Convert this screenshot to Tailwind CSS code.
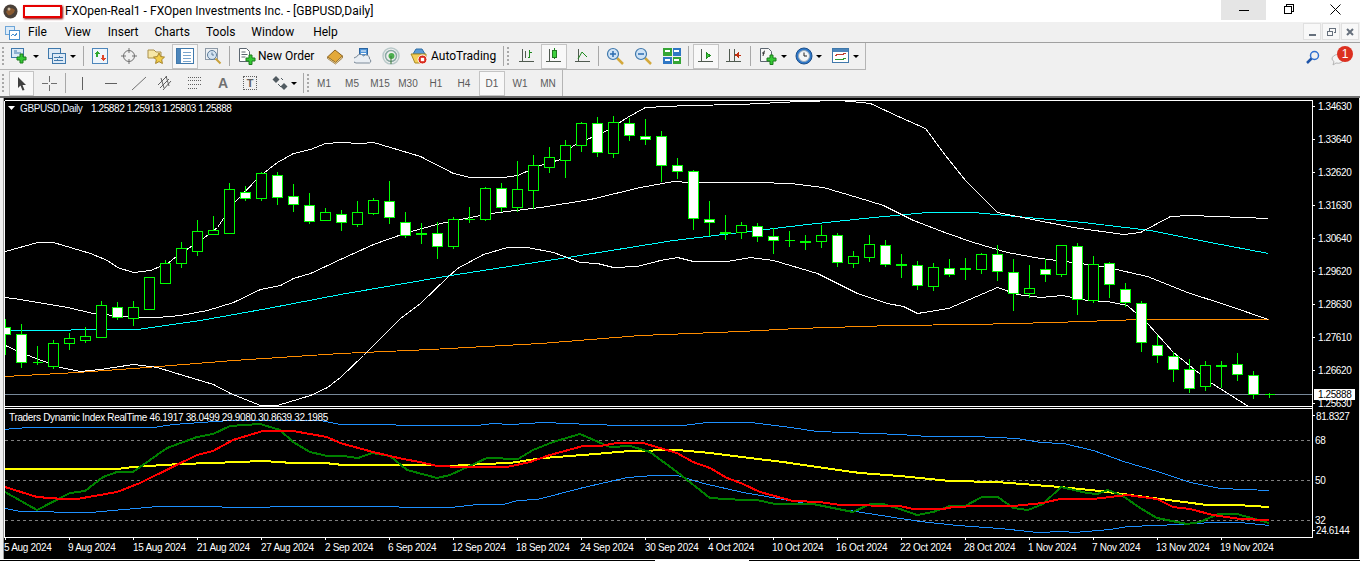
<!DOCTYPE html>
<html lang="en">
<head>
    <meta charset="UTF-8">
    <title>FXOpen-Real1 - FXOpen Investments Inc. - [GBPUSD,Daily]</title>
    <script src="https://cdn.jsdelivr.net/npm/@tailwindcss/browser@4"></script>
</head>
<body class="w-[1360px] h-[561px] overflow-hidden bg-[#f0f0f0] font-['Liberation_Sans',Arial,sans-serif]">

    <!-- Title bar -->
    <div class="h-[22px] bg-white flex items-center relative">
        <svg class="ml-[3px]" width="15" height="15" viewBox="0 0 15 15">
            <circle cx="7.5" cy="7.5" r="7" fill="#4a4038"/>
            <path d="M3 8c2-4 6-5 9-2-1 4-5 6-7 5z" fill="#8a5a30"/>
            <circle cx="6" cy="5" r="1.5" fill="#c9b8a0"/>
        </svg>
        <div class="ml-[5px] w-[39px] h-[13px] bg-white border-2 border-[#e60000] shadow-[1px_1px_2px_#800000]"></div>
        <span class="ml-[3px] text-[12px] text-black font-['Roboto',sans-serif] tracking-[0.03px] whitespace-nowrap">FXOpen-Real1 - FXOpen Investments Inc. - [GBPUSD,Daily]</span>
        <div class="absolute left-[1221px] top-0 w-[45px] h-[20px] bg-[#e5e5e5] flex items-center justify-center">
            <div class="w-[10px] h-px bg-black"></div>
        </div>
        <svg class="absolute left-[1284px] top-[4px]" width="10" height="10" viewBox="0 0 10 10" fill="none" stroke="#000" shape-rendering="crispEdges">
            <rect x="0.5" y="2.5" width="7" height="7"/>
            <path d="M2.5 2.5v-2h7v7h-2"/>
        </svg>
        <svg class="absolute left-[1330px] top-[4px]" width="11" height="11" viewBox="0 0 11 11" stroke="#000">
            <path d="M0.5 0.5l10 10M10.5 0.5l-10 10"/>
        </svg>
    </div>

    <!-- Menu -->
    <div class="h-[21px] flex items-center relative border-b border-[#a0a0a0] text-[12px] text-black font-['Roboto',sans-serif]">
        <svg class="ml-[5px]" width="15" height="15" viewBox="0 0 15 15" fill="none" shape-rendering="crispEdges">
            <rect x="0.5" y="1.5" width="9" height="8" fill="#dcebf8" stroke="#6ea6d8"/>
            <rect x="4.5" y="5.5" width="10" height="9" fill="#fff" stroke="#4a90d0"/>
            <path d="M6 11l2-2 2 2 2-3" stroke="#4a90d0"/>
        </svg>
        <span class="ml-[8px]">File</span>
        <span class="ml-[18px]">View</span>
        <span class="ml-[17px]">Insert</span>
        <span class="ml-[16px]">Charts</span>
        <span class="ml-[16px]">Tools</span>
        <span class="ml-[16px]">Window</span>
        <span class="ml-[19px]">Help</span>
        <div class="absolute left-[1303px] top-[1px] w-[18px] h-[17px] bg-[#f8f8f8] border border-[#e0e0e0] flex items-end justify-center pb-[3px]">
            <div class="w-[7px] h-[2px] bg-[#66707c]"></div>
        </div>
        <div class="absolute left-[1322px] top-[1px] w-[18px] h-[17px] bg-[#f8f8f8] border border-[#e0e0e0] flex items-center justify-center">
            <svg width="9" height="8" viewBox="0 0 9 8" fill="none" stroke="#66707c" shape-rendering="crispEdges"><rect x="0.5" y="3.5" width="5" height="4"/><path d="M2.5 3v-2.500h6v4h-2"/></svg>
        </div>
        <div class="absolute left-[1341px] top-[1px] w-[18px] h-[17px] bg-[#f8f8f8] border border-[#e0e0e0] flex items-center justify-center">
            <svg width="8" height="8" viewBox="0 0 8 8" stroke="#66707c" stroke-width="2"><path d="M1 1l6 6M7 1l-6 6"/></svg>
        </div>
    </div>

    <!-- Toolbar row 1 -->
    <div class="h-[27px] w-[866px] flex items-center border-b border-r border-[#b4b4b4]">
        <div class="ml-[2px] w-[3px] h-[18px] border-l-2 border-dotted border-[#a8a8a8]"></div>
        <svg class="ml-[5px]" width="18" height="18" viewBox="0 0 18 18"><rect x="1.500" y="1.500" width="12" height="9" fill="#dce9f6" stroke="#3f78ab"/><path d="M4 6h7M4 4h3" stroke="#3f78ab"/><path d="M10 7h3v3h3v3h-3v3h-3v-3H7v-3h3z" fill="#35c935" stroke="#1c7c1c"/></svg>
        <div class="ml-[5px] w-0 h-0 border-x-[3px] border-t-[3px] border-x-transparent border-t-black"></div>
        <svg class="ml-[9px]" width="18" height="18" viewBox="0 0 18 18" fill="#dce9f6" stroke="#3f78ab" shape-rendering="crispEdges"><rect x="0.500" y="1.500" width="12" height="10"/><rect x="4.500" y="6.500" width="13" height="10"/><path d="M6 10h9M6 13h9M11 9v2M9 12v2"/></svg>
        <div class="ml-[4px] w-0 h-0 border-x-[3px] border-t-[3px] border-x-transparent border-t-black"></div>
        <div class="ml-[7px] w-px h-[20px] bg-[#a8a8a8]"></div>
        <svg class="ml-[7px]" width="18" height="18" viewBox="0 0 18 18" shape-rendering="crispEdges"><rect x="1.500" y="1.500" width="15" height="15" fill="#eef5fb" stroke="#4d86bb"/><path d="M6 4l3 3H7v3H5V7H3z" fill="#2fa82f"/><path d="M12 14l-3-3h2V8h2v3h2z" fill="#e0452a"/></svg>
        <svg class="ml-[11px]" width="18" height="18" viewBox="0 0 18 18" fill="none" stroke="#707070"><circle cx="9" cy="9" r="5.500"/><path d="M9 1v5M9 12v5M1 9h5M12 9h5"/></svg>
        <svg class="ml-[9px]" width="18" height="18" viewBox="0 0 18 18"><path d="M1 3h6l2 2h5v6H1z" fill="#f6e7a8" stroke="#a98f4a"/><path d="M12 6l1.700 3.600 3.800.5-2.800 2.600.7 3.800-3.400-1.900-3.400 1.900.7-3.800-2.800-2.600 3.800-.5z" fill="#f2cd4a" stroke="#a5832a"/></svg>
        <div class="ml-[7px] w-[26px] h-[25px] bg-[#f8f8f8] border border-[#c4c4c4] flex items-center justify-center">
            <svg width="18" height="16" viewBox="0 0 18 16" shape-rendering="crispEdges"><rect x="0.500" y="0.500" width="17" height="15" fill="#fff" stroke="#3f78ab"/><rect x="1" y="1" width="4" height="14" fill="#4d86bb"/><path d="M7 4h8M7 7h8M7 10h8M7 13h8" stroke="#7aa5cc"/></svg>
        </div>
        <svg class="ml-[6px]" width="18" height="18" viewBox="0 0 18 18" fill="none"><rect x="1.500" y="1.500" width="12" height="11" fill="#edf0f3" stroke="#8d99a6"/><circle cx="8" cy="8" r="4.500" fill="#d5e4f2" stroke="#5a7a98"/><path d="M8 5.500V8h2" stroke="#5a7a98"/><path d="M11.500 11.500l5 5" stroke="#c9a13c" stroke-width="2"/></svg>
        <div class="ml-[7px] w-px h-[20px] bg-[#a8a8a8]"></div>
        <svg class="ml-[8px]" width="18" height="18" viewBox="0 0 18 18"><path d="M1.500 1.500h7l3 3v10h-10z" fill="#fff" stroke="#5c6670"/><path d="M3.500 5h4M3.500 7.500h6M3.500 10h4" stroke="#5c6670"/><path d="M11 8h3v3h3v3h-3v3.500h-3V14H8v-3h3z" fill="#35c935" stroke="#1c7c1c"/></svg>
        <span class="ml-[2px] w-[58px] text-[12px] text-black font-['Roboto',sans-serif] whitespace-nowrap">New Order</span>
        <svg class="ml-[10px]" width="18" height="18" viewBox="0 0 18 18"><path d="M1.500 10L9 3l7.500 6-7 6.500z" fill="#e3a93a" stroke="#8a6220"/><path d="M1.500 10l8 5.500 7-6.500v2l-7 6-8-5.500z" fill="#f5e2ae" stroke="#8a6220" stroke-width="0.700"/></svg>
        <svg class="ml-[10px]" width="18" height="18" viewBox="0 0 18 18"><rect x="5.500" y="1.500" width="8" height="10" fill="#4e94d8" stroke="#2a64a0"/><path d="M7 4h5M7 6.500h5" stroke="#fff"/><path d="M2 16a3 3 0 0 1 .5-6 4 4 0 0 1 7-1 3.500 3.500 0 0 1 6 3 2.200 2.200 0 0 1 0 4z" fill="#e9eef3" stroke="#7d8b99"/></svg>
        <svg class="ml-[10px]" width="18" height="18" viewBox="0 0 18 18" fill="none"><circle cx="9" cy="9" r="8" stroke="#b9c9c9" stroke-width="1.500"/><circle cx="9" cy="9" r="5.500" stroke="#8aa9a4" stroke-width="1.500"/><circle cx="9.500" cy="9" r="3" fill="#4caf50"/><path d="M9 9v8" stroke="#3a7c3a"/></svg>
        <svg class="ml-[10px]" width="18" height="18" viewBox="0 0 18 18"><path d="M3 7l3-5h6l3 5z" fill="#5a9bd5" stroke="#2f6ea5"/><path d="M1 7h15v2l-3 7H5L2 9z" fill="#f3cf58" stroke="#a98a25"/><circle cx="12.500" cy="12.500" r="4.500" fill="#d92a1c" stroke="#fff"/><rect x="10.800" y="10.800" width="3.400" height="3.400" fill="#fff"/></svg>
        <span class="ml-[3px] w-[66px] text-[12px] text-black font-['Roboto',sans-serif] whitespace-nowrap">AutoTrading</span>
        <div class="ml-[6px] w-px h-[20px] bg-[#a8a8a8]"></div>
        <div class="ml-[3px] w-[3px] h-[18px] border-l-2 border-dotted border-[#a8a8a8]"></div>
        <svg class="ml-[8px]" width="18" height="18" viewBox="0 0 18 18" fill="none" stroke="#505a50" shape-rendering="crispEdges"><path d="M4.500 2v13M1 14.500h15"/><path d="M7 4v7" /><path d="M11.500 3v7M11.500 10h-2M11.500 5h2" stroke="#1f8a1f"/></svg>
        <div class="ml-[5px] w-[26px] h-[25px] bg-[#f8f8f8] border border-[#c4c4c4] flex items-center justify-center">
            <svg width="18" height="18" viewBox="0 0 18 18" fill="none" stroke="#505a50" shape-rendering="crispEdges"><path d="M4.500 2v13M1 14.500h15"/><path d="M9.500 1v11" stroke="#1f8a1f"/><rect x="7.500" y="3.500" width="4" height="7" fill="#3ed13e" stroke="#1f7a1f"/></svg>
        </div>
        <svg class="ml-[7px]" width="18" height="18" viewBox="0 0 18 18" fill="none" stroke="#505a50"><path d="M4.500 2v13M1 14.500h15" shape-rendering="crispEdges"/><path d="M4 12l4-7 5 5" stroke="#1f8a1f"/></svg>
        <div class="ml-[6px] w-px h-[20px] bg-[#a8a8a8]"></div>
        <svg class="ml-[7px]" width="18" height="18" viewBox="0 0 18 18" fill="none"><path d="M11 11l6 6" stroke="#d4a93c" stroke-width="2.500"/><circle cx="7" cy="7" r="5.500" fill="#cfe3f6" stroke="#3f78ab" stroke-width="1.200"/><path d="M4 7h6M7 4v6" stroke="#2b6cb0" stroke-width="1.500"/></svg>
        <svg class="ml-[10px]" width="18" height="18" viewBox="0 0 18 18" fill="none"><path d="M11 11l6 6" stroke="#d4a93c" stroke-width="2.500"/><circle cx="7" cy="7" r="5.500" fill="#cfe3f6" stroke="#3f78ab" stroke-width="1.200"/><path d="M4 7h6" stroke="#2b6cb0" stroke-width="1.500"/></svg>
        <svg class="ml-[11px]" width="18" height="18" viewBox="0 0 18 18" shape-rendering="crispEdges"><rect x="0" y="1" width="8.500" height="7.500" fill="#35a535"/><rect x="9.500" y="1" width="8.500" height="7.500" fill="#2f77c4"/><rect x="0" y="9.500" width="8.500" height="7.500" fill="#2f77c4"/><rect x="9.500" y="9.500" width="8.500" height="7.500" fill="#35a535"/><path d="M2 4h5M11 4h5M2 13h5M11 13h5" stroke="#fff" stroke-width="2"/></svg>
        <div class="ml-[7px] w-px h-[20px] bg-[#a8a8a8]"></div>
        <div class="ml-[4px] w-[26px] h-[25px] bg-[#f8f8f8] border border-[#c4c4c4] flex items-center justify-center">
            <svg width="18" height="18" viewBox="0 0 18 18" fill="none" stroke="#505a50" shape-rendering="crispEdges"><path d="M4.500 2v13M1 14.500h15"/><path d="M9 5v7l4-3.500z" fill="#3ed13e" stroke="#1f8a1f"/></svg>
        </div>
        <svg class="ml-[6px]" width="18" height="18" viewBox="0 0 18 18" fill="none" stroke="#505a50" shape-rendering="crispEdges"><path d="M4.500 2v13M9.500 2v13M1 14.500h15"/><path d="M16 8h-3M13 6v4l-2.500-2z" stroke="#c03010" fill="#c03010"/></svg>
        <div class="ml-[7px] w-px h-[20px] bg-[#a8a8a8]"></div>
        <svg class="ml-[8px]" width="18" height="18" viewBox="0 0 18 18"><path d="M1.500 1.500h8l3 3v10h-11z" fill="#f6f6f6" stroke="#5c6670"/><path d="M6 4c-2 0-1 2-2 5M3 6h3" fill="none" stroke="#333"/><path d="M11 8h3v3h3v3h-3v3.500h-3V14H8v-3h3z" fill="#35c935" stroke="#1c7c1c"/></svg>
        <div class="ml-[4px] w-0 h-0 border-x-[3px] border-t-[3px] border-x-transparent border-t-black"></div>
        <svg class="ml-[8px]" width="18" height="18" viewBox="0 0 18 18" fill="none"><circle cx="9" cy="9" r="8" fill="#2f78c8" stroke="#1d4f8a"/><circle cx="9" cy="9" r="5.500" fill="#f3f5f7" stroke="#9ab"/><path d="M9 5.500V9h3" stroke="#222"/></svg>
        <div class="ml-[3px] w-0 h-0 border-x-[3px] border-t-[3px] border-x-transparent border-t-black"></div>
        <svg class="ml-[10px]" width="18" height="18" viewBox="0 0 18 18" fill="none" shape-rendering="crispEdges"><rect x="0.500" y="1.500" width="16" height="14" fill="#fff" stroke="#3f78ab"/><rect x="1" y="2" width="15" height="3" fill="#4d86bb"/><path d="M3 9l3-2 3 1 5-2" stroke="#c04030"/><path d="M3 13l3-1 3 1 5-2" stroke="#2f9a2f"/></svg>
        <div class="ml-[3px] w-0 h-0 border-x-[3px] border-t-[3px] border-x-transparent border-t-black"></div>
    </div>

    <!-- Toolbar row 2 -->
    <div class="h-[26px] relative flex items-center text-[10px] text-[#5a5a5a]">
        <div class="w-[563px] h-full flex items-center border-r border-[#b4b4b4]">
            <div class="ml-[2px] w-[3px] h-[18px] border-l-2 border-dotted border-[#a8a8a8]"></div>
            <div class="ml-[4px] w-[25px] h-[25px] bg-[#f8f8f8] border border-[#c4c4c4] flex items-center justify-center">
                <svg width="12" height="15" viewBox="0 0 12 15"><path d="M2 1l8 8H6.500l2 5-2 .5-2-5L2 12z" fill="#404040"/></svg>
            </div>
            <svg class="ml-[6px]" width="18" height="18" viewBox="0 0 18 18" stroke="#707070" shape-rendering="crispEdges"><path d="M9.500 2v6M9.500 11v6M2 9.500h6M11 9.500h6"/></svg>
            <div class="ml-[7px] w-px h-[20px] bg-[#a8a8a8]"></div>
            <svg class="ml-[7px]" width="18" height="18" viewBox="0 0 18 18" stroke="#606060" shape-rendering="crispEdges"><path d="M9.500 3v13"/></svg>
            <svg class="ml-[11px]" width="18" height="18" viewBox="0 0 18 18" stroke="#606060" shape-rendering="crispEdges"><path d="M3 9.500h12"/></svg>
            <svg class="ml-[10px]" width="18" height="18" viewBox="0 0 18 18" stroke="#707070"><path d="M2 16L16 3"/></svg>
            <svg class="ml-[9px]" width="18" height="18" viewBox="0 0 18 18" fill="none" stroke="#606060"><path d="M1 11L10 2M3 14l9-9M6 16l8-9M4 4l3 10M9 2l3 10"/></svg>
            <svg class="ml-[11px]" width="18" height="18" viewBox="0 0 18 18" stroke="#606060" stroke-dasharray="1 1"><path d="M2 3.500h14M2 6.500h14M2 10.500h14M2 14.500h9"/></svg>
            <span class="ml-[10px] w-[18px] text-center text-[14px] font-bold text-[#707070]">A</span>
            <div class="ml-[9px] w-[18px] flex justify-center">
                <div class="w-[14px] h-[14px] border border-dotted border-[#606060] flex items-center justify-center text-[11px] font-bold text-[#606060]">T</div>
            </div>
            <svg class="ml-[12px]" width="18" height="18" viewBox="0 0 18 18" fill="#505a60"><path d="M5 2l3.500 3.500L5 9 1.500 5.500z"/><path d="M13 9l3.500 3.500L13 16l-3.500-3.500z"/><path d="M7 10l3 3M10 4l2 2" stroke="#505a60" fill="none"/></svg>
            <div class="ml-[2px] w-0 h-0 border-x-[3px] border-t-[3px] border-x-transparent border-t-black"></div>
            <div class="ml-[6px] w-px h-[20px] bg-[#a8a8a8]"></div>
            <div class="ml-[3px] w-[3px] h-[18px] border-l-2 border-dotted border-[#a8a8a8]"></div>
            <span class="w-[28px] text-center">M1</span>
            <span class="w-[28px] text-center">M5</span>
            <span class="w-[28px] text-center">M15</span>
            <span class="w-[28px] text-center">M30</span>
            <span class="w-[28px] text-center">H1</span>
            <span class="w-[28px] text-center">H4</span>
            <div class="w-[28px] flex justify-center"><span class="w-[26px] h-[25px] flex items-center justify-center bg-[#f8f8f8] border border-[#c4c4c4]">D1</span></div>
            <span class="w-[28px] text-center">W1</span>
            <span class="w-[28px] text-center">MN</span>
        </div>
        <svg class="absolute left-[1305px] top-[-20px]" width="15" height="15" viewBox="0 0 15 15" fill="none"><circle cx="9.500" cy="5.500" r="4" stroke="#2f6fd0" stroke-width="1.500"/><path d="M6.500 8.500L2 13" stroke="#1f55a8" stroke-width="2.500"/></svg>
        <svg class="absolute left-[1331px] top-[-16px]" width="16" height="13" viewBox="0 0 16 13"><path d="M1 5a6 4.500 0 0 1 12 0 6 4.500 0 0 1-8 4l-3 2 1-3.500A4 4 0 0 1 1 5z" fill="#f4f4f4" stroke="#b4b4b4"/></svg>
        <div class="absolute left-[1337px] top-[-24px] w-[16px] h-[16px] rounded-full bg-[#dc3020] text-white text-[12px] flex items-center justify-center">1</div>
    </div>

    <!-- Chart window -->
    <div class="h-[2px] bg-[#6e6e6e]"></div>
    <div class="h-[461px] flex">
        <div class="w-[3px]"></div>
        <div class="w-px bg-[#a0a0a0]"></div>
        <svg id="chart" class="bg-black block" width="1355" height="461" viewBox="4 98 1355 461" shape-rendering="crispEdges">
            <defs>
                <clipPath id="mainClip"><rect x="5" y="101" width="1307" height="305"/></clipPath>
            </defs>

            <g clip-path="url(#mainClip)" fill="none">
                <line x1="5" y1="394.500" x2="1312" y2="394.500" stroke="#778899"/>
                <g transform="translate(.5 .5)">
                    <!-- moving averages -->
                    <polyline stroke="#ff8c00" points="5,376 77,372 133,368 233,360 340,353 430,349 540,343 640,335 740,331 797,328 893,325 973,324 1053,322 1140,319 1230,319 1268,319"/>
                    <polyline stroke="#00ffff" points="5,330 137,329 200,320 267,308 340,294 450,275 567,257 673,240 740,232 807,224 873,217 927,212 973,212 1027,217 1083,222 1150,230 1210,242 1268,253"/>
                    <!-- bollinger bands -->
                    <polyline stroke="#fff" points="5,251 37,242 53,242 90,253 107,260 117,267 133,272 150,270 167,263 180,253 200,240 217,227 233,203 260,175 277,162 293,153 310,149 325,143 340,142 360,143 373,142 390,147 420,156 453,173 470,177 503,177 517,175 540,165 560,159 573,145 607,130 627,117 645,107 687,105 740,104 800,101 840,100 870,103 900,117 925,128 945,155 965,180 997,212 1027,218 1073,227 1123,234 1140,232 1170,216 1190,215 1268,218"/>
                    <polyline stroke="#fff" points="5,297 20,299 43,303 67,307 93,313 133,317 157,317 180,315 207,310 233,302 260,289 280,285 293,278 310,273 340,259 373,244 407,232 440,223 490,213 540,207 590,199 640,187 673,181 690,182 740,182 757,182 790,183 823,187 857,197 883,205 913,220 947,233 973,242 1007,252 1040,258 1073,262 1107,267 1147,276 1187,292 1227,305 1268,319"/>
                    <polyline stroke="#fff" points="5,345 20,352 33,357 60,367 80,371 100,369 133,364 157,367 173,372 213,384 230,393 260,405 277,405 310,395 327,387 340,377 363,355 400,318 420,303 447,277 457,268 483,254 507,247 527,247 553,252 580,262 597,263 613,267 637,266 660,260 677,257 693,261 727,261 750,257 773,260 817,273 857,293 887,303 903,306 917,313 948,308 997,287 1017,294 1040,297 1062,295 1087,300 1107,301 1127,305 1147,323 1173,352 1210,382 1248,406"/>
                </g>
                <g id="candles"></g>
            </g>

            <!-- indicator window -->
            <g fill="none">
                <path d="M5 440.500H1312M5 480.500H1312M5 520.500H1312" stroke="#808080" stroke-dasharray="3 3"/>
                <polyline transform="translate(.5 .5)" stroke="#1e90ff" points="5,429 13,428 30,427 153,427 173,424 200,422 230,420 260,420 320,420 340,424 390,424 400,425 450,425 477,425 493,423 510,424 543,422 590,424 623,425 683,425 707,422 750,422 783,426 817,431 900,434 927,436 973,436 1017,438 1040,442 1063,443 1093,450 1123,461 1157,471 1190,482 1220,488 1269,490"/>
                <polyline transform="translate(.5 .5)" stroke="#1e90ff" points="5,508 20,511 30,511 77,512 90,512 157,506 220,506 223,507 317,506 397,506 400,507 450,507 477,504 503,504 517,500 537,499 583,487 627,477 653,475 677,475 703,483 743,492 783,499 817,505 900,518 920,521 957,525 1000,528 1037,532 1063,531 1073,532 1110,529 1127,526 1157,525 1213,522 1240,522 1269,525"/>
                <polyline stroke="#ffff00" stroke-width="2" points="5,469 117,469 133,467 180,464 213,463 263,461 293,463 325,463 343,465 420,465 450,466 483,464 510,463 543,458 583,455 630,451 677,450 710,453 750,458 783,462 817,467 860,473 900,476 950,481 997,482 1060,487 1100,491 1153,498 1207,505 1237,505 1269,507"/>
                <polyline stroke="#008000" stroke-width="2" points="5,492 37,510 70,493 85,491 103,477 117,472 133,472 167,448 197,437 213,434 230,426 260,424 280,430 293,442 310,452 327,456 343,456 358,458 372,453 390,456 407,470 437,478 450,475 487,458 518,459 533,450 553,442 580,434 610,447 630,446 650,452 677,472 710,498 743,500 757,500 775,504 813,504 853,512 870,504 883,504 900,509 917,515 933,512 950,506 965,506 982,497 998,497 1013,508 1028,510 1043,504 1061,487 1087,493 1097,494 1108,490 1123,496 1140,508 1157,518 1187,524 1200,522 1218,514 1237,514 1269,523"/>
                <polyline stroke="#ff0000" stroke-width="2" points="5,487 37,497 63,499 77,499 117,492 140,483 197,455 213,451 233,440 263,431 293,431 327,437 340,443 373,452 403,459 420,462 437,466 463,467 507,467 530,462 550,455 583,446 600,446 617,443 643,443 677,453 693,462 710,468 727,478 743,484 760,492 793,501 820,502 840,505 900,506 913,509 943,509 953,507 980,506 1013,506 1043,503 1060,499 1093,499 1127,495 1157,499 1173,507 1190,509 1213,515 1240,519 1269,520"/>
            </g>

            <!-- frames and ticks -->
            <g fill="none" stroke="#fff">
                <path d="M4.500 100.500H1312.500V537.500H4.500V100.500"/>
                <path d="M4.500 406.500H1312.500M4.500 408.500H1312.500"/>
                <path d="M1312 106.500h3M1312 139.500h3M1312 172.500h3M1312 205.500h3M1312 238.500h3M1312 271.500h3M1312 304.500h3M1312 337.500h3M1312 370.500h3M1312 403.500h3M1312 415.500h3M1312 530.500h3"/>
                <path d="M5.500 537v3M69.500 537v3M133.500 537v3M197.500 537v3M261.500 537v3M325.500 537v3M389.500 537v3M453.500 537v3M517.500 537v3M581.500 537v3M645.500 537v3M709.500 537v3M773.500 537v3M837.500 537v3M901.500 537v3M965.500 537v3M1029.500 537v3M1093.500 537v3M1157.500 537v3M1221.500 537v3"/>
            </g>
            <path d="M8 106h7l-3.500 4z" fill="#fff" shape-rendering="auto"/>

            <g class="text-[10px] tracking-[-0.4px]" fill="#fff" shape-rendering="auto">
                <text x="20" y="112" fill="#e4eefc">GBPUSD,Daily</text>
                <text x="91" y="112">1.25882 1.25913 1.25803 1.25888</text>
                <text x="9" y="421" class="tracking-[-0.34px]">Traders Dynamic Index RealTime 46.1917 38.0499 29.9080 30.8639 32.1985</text>

                <text x="1318" y="110">1.34630</text>
                <text x="1318" y="143">1.33640</text>
                <text x="1318" y="176">1.32620</text>
                <text x="1318" y="209">1.31630</text>
                <text x="1318" y="242">1.30640</text>
                <text x="1318" y="275">1.29620</text>
                <text x="1318" y="308">1.28630</text>
                <text x="1318" y="341">1.27610</text>
                <text x="1318" y="374">1.26620</text>
                <text x="1318" y="407">1.25630</text>
                <rect x="1314" y="389" width="41" height="11" fill="#fff" shape-rendering="crispEdges"/>
                <text x="1318" y="398" fill="#000">1.25888</text>

                <text x="1316" y="420">81.8327</text>
                <text x="1315" y="444">68</text>
                <text x="1315" y="484">50</text>
                <text x="1315" y="524">32</text>
                <text x="1316" y="534">24.6144</text>

                <g class="tracking-[-0.3px]">
                    <text x="4" y="551">5 Aug 2024</text>
                    <text x="68" y="551">9 Aug 2024</text>
                    <text x="133" y="551">15 Aug 2024</text>
                    <text x="197" y="551">21 Aug 2024</text>
                    <text x="261" y="551">27 Aug 2024</text>
                    <text x="325" y="551">2 Sep 2024</text>
                    <text x="388" y="551">6 Sep 2024</text>
                    <text x="452" y="551">12 Sep 2024</text>
                    <text x="516" y="551">18 Sep 2024</text>
                    <text x="580" y="551">24 Sep 2024</text>
                    <text x="645" y="551">30 Sep 2024</text>
                    <text x="708" y="551">4 Oct 2024</text>
                    <text x="772" y="551">10 Oct 2024</text>
                    <text x="836" y="551">16 Oct 2024</text>
                    <text x="900" y="551">22 Oct 2024</text>
                    <text x="964" y="551">28 Oct 2024</text>
                    <text x="1028" y="551">1 Nov 2024</text>
                    <text x="1092" y="551">7 Nov 2024</text>
                    <text x="1156" y="551">13 Nov 2024</text>
                    <text x="1220" y="551">19 Nov 2024</text>
                </g>
            </g>
        </svg>
        <div class="w-px"></div>
    </div>

    <!-- Bottom edge -->
    <div class="h-px bg-white"></div>
    <div class="h-px flex">
        <div class="w-[655px] bg-black"></div>
        <div class="w-[94px] bg-white"></div>
        <div class="flex-1 bg-black"></div>
    </div>

    <script>
        // [wick top, body top, body bottom, wick bottom, 1 = white body]
        var candles = [
            [319,327,334,355,1],[324,334,362,368,1],[346,362,362,365,0],[340,343,366,369,0],[333,338,343,350,0],
            [327,336,340,343,0],[301,305,337,337,0],[302,307,317,320,1],[301,307,318,326,0],[277,277,309,309,0],
            [260,263,283,283,0],[242,248,263,268,0],[220,231,251,256,0],[216,230,234,234,0],[183,189,233,233,0],
            [186,192,198,201,1],[172,173,198,201,0],[172,175,197,205,1],[184,196,204,212,1],[193,205,221,224,1],
            [208,212,220,220,0],[210,214,222,231,1],[201,212,224,227,0],[198,200,213,215,0],[181,201,217,224,1],
            [212,222,235,238,1],[223,233,234,244,1],[222,233,246,259,1],[217,219,246,249,0],[207,219,219,223,0],
            [187,188,219,221,0],[183,188,207,212,1],[161,189,207,212,0],[155,165,190,209,0],[147,157,167,173,0],
            [140,145,160,178,0],[122,123,145,152,0],[117,123,152,157,1],[116,122,153,158,0],[118,123,135,141,1],
            [119,136,139,145,1],[131,136,165,182,1],[158,165,171,179,1],[170,171,218,230,1],[201,219,222,236,1],
            [215,232,233,240,1],[222,225,232,239,0],[223,226,236,242,1],[228,236,240,254,1],[231,240,240,247,0],
            [235,241,242,250,1],[225,235,241,248,0],[233,235,262,267,1],[251,256,263,268,0],[235,244,257,262,0],
            [240,245,264,267,1],[254,264,265,278,1],[261,265,285,290,1],[263,267,286,291,0],[259,268,274,277,1],
            [258,268,269,280,1],[253,254,269,274,0],[245,254,271,281,1],[259,272,293,311,1],[265,288,293,298,0],
            [259,269,274,282,1],[245,245,274,277,0],[243,246,299,315,1],[256,264,300,303,0],[262,263,284,298,1],
            [283,289,302,307,1],[301,303,342,352,1],[335,345,355,363,1],[352,356,369,382,1],[359,369,388,393,1],
            [361,365,386,391,0],[361,365,366,388,1],[353,364,374,381,1],[371,375,394,399,1],[393,394,394,398,0]
        ];

        var out = '';
        candles.forEach(function (c, i) {
            var x = 5 + 16 * i;
            out += '<line x1="' + (x + .5) + '" y1="' + c[0] + '" x2="' + (x + .5) + '" y2="' + c[3] + '" stroke="#00ff00"/>';
            if (c[1] == c[2]) {
                // doji: the body is only a dash
                out += '<line x1="' + (x - 4.5) + '" y1="' + (c[1] + .5) + '" x2="' + (x + 5.5) + '" y2="' + (c[1] + .5) + '" stroke="#00ff00"/>';
            } else {
                out += '<rect x="' + (x - 4.5) + '" y="' + (c[1] + .5) + '" width="10" height="' + (c[2] - c[1]) + '" fill="' + (c[4] ? '#fff' : '#000') + '" stroke="#00ff00"/>';
            }
        });
        document.getElementById('candles').innerHTML = out;
    </script>
</body>
</html>
